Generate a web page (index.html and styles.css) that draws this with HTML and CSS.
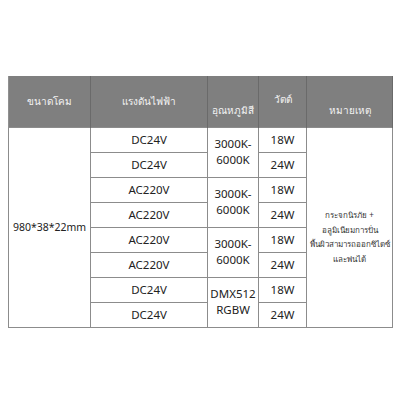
FILE: index.html
```html
<!DOCTYPE html>
<html lang="th">
<head>
<meta charset="utf-8">
<link rel="stylesheet" href="styles.css">
</head>
<body>
<table class="spec">
  <colgroup>
    <col class="c1"><col class="c2"><col class="c3"><col class="c4"><col class="c5">
  </colgroup>
  <thead>
    <tr>
      <th>ขนาดโคม</th>
      <th>แรงดันไฟฟ้า</th>
      <th class="low">อุณหภูมิสี</th>
      <th class="high dark-left">วัตต์</th>
      <th class="low">หมายเหตุ</th>
    </tr>
  </thead>
  <tbody>
    <tr>
      <td rowspan="8" class="size">980*38*22mm</td>
      <td>DC24V</td>
      <td rowspan="2" class="temp">3000K-<br>6000K</td>
      <td>18W</td>
      <td rowspan="8" class="note">กระจกนิรภัย +<br>อลูมิเนียมการปั่น<br>พื้นผิวสามารถออกซิไดซ์<br>และพ่นได้</td>
    </tr>
    <tr><td>DC24V</td><td>24W</td></tr>
    <tr><td>AC220V</td><td rowspan="2" class="temp">3000K-<br>6000K</td><td>18W</td></tr>
    <tr><td>AC220V</td><td>24W</td></tr>
    <tr><td>AC220V</td><td rowspan="2" class="temp">3000K-<br>6000K</td><td>18W</td></tr>
    <tr><td>AC220V</td><td>24W</td></tr>
    <tr><td>DC24V</td><td rowspan="2" class="temp">DMX512<br>RGBW</td><td>18W</td></tr>
    <tr><td>DC24V</td><td>24W</td></tr>
  </tbody>
</table>
</body>
</html>
```

FILE: styles.css
```css
html, body {
  margin: 0;
  padding: 0;
  background: #ffffff;
}
body {
  padding: 76px 8px 0 8px;
  font-family: "Noto Sans", "Open Sans", sans-serif;
}
.spec {
  border-collapse: collapse;
  table-layout: fixed;
  width: 384px;
}
.c1 { width: 82px; }
.c2 { width: 117px; }
.c3 { width: 51px; }
.c4 { width: 48px; }
.c5 { width: 86px; }

.spec th {
  background: #7f7f7f;
  color: #f4f4f4;
  font-size: 10px;
  font-weight: normal;
  height: 51px;
  padding: 0;
  text-align: center;
  vertical-align: middle;
  border-left: 1px solid #6a6a6a;
  border-right: 1px solid #6a6a6a;
  box-sizing: border-box;
}
.spec th:first-child { border-left: 1px solid #909090; }
.spec th:first-child + th { border-left: 1px solid #3f3f3f; }
.spec th.dark-left { border-left: 1px solid #4a4a4a; }
.spec th.low { padding-top: 19px; }
.spec th.high { padding-bottom: 3px; }

.spec td {
  border: 1px solid #8c8c8c;
  height: 24px;
  padding: 0;
  font-size: 11.5px;
  color: #222222;
  text-align: center;
  vertical-align: middle;
  line-height: 16px;
}
.spec td.size { font-size: 10.5px; }
.spec td.temp { line-height: 16px; }
.spec td.note {
  font-size: 8px;
  line-height: 14.5px;
  color: #333333;
  padding-top: 20px;
}
```
